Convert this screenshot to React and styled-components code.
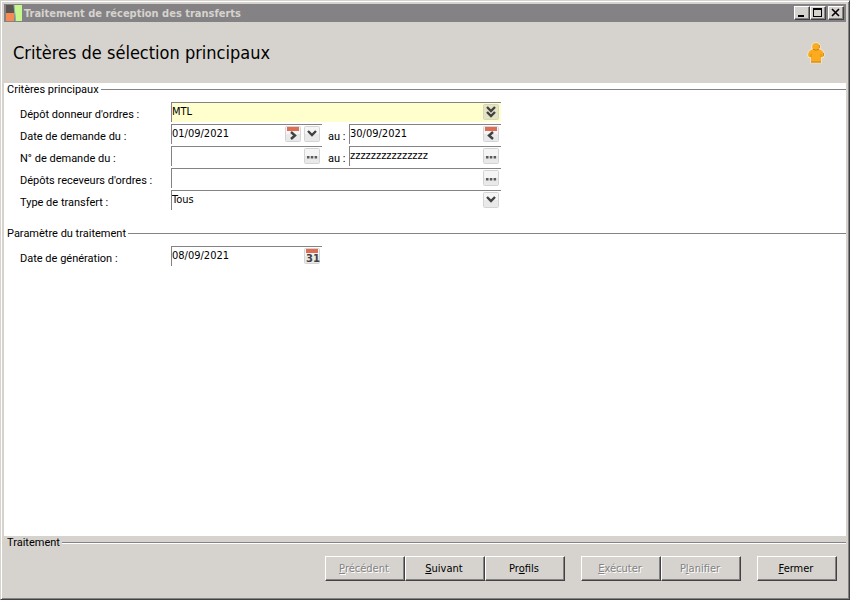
import React from "react";
import styled, { createGlobalStyle } from "styled-components";

const GlobalStyle = createGlobalStyle`
  * {
    box-sizing: border-box;
  }

  body {
    margin: 0;
    background: #d6d3ce;
    color: #000000;
    font-family: Roboto, "Liberation Sans", Arial, sans-serif;
    font-size: 11px;
  }

  button, input, select {
    font-family: "DejaVu Sans Condensed", Tahoma, sans-serif;
    font-size: 11px;
    color: inherit;
  }
`;

const Window = styled.div`
  display: flex;
  flex-direction: column;
  min-height: 100vh;
  padding: 2px;
  background: #d6d3ce;
  border: 1px solid;
  border-color: #d6d3ce #424142 #424142 #d6d3ce;
  box-shadow: inset 1px 1px 0 #ffffff, inset -1px -1px 0 #848284;
`;

const TitleBar = styled.header`
  display: flex;
  align-items: center;
  height: 18px;
  margin: 1px 1px 0;
  padding: 0 2px 0 1px;
  background: #848284;
`;

const Title = styled.h1`
  flex: 1;
  margin: 0 0 0 1px;
  color: #d6d3ce;
  font-family: "DejaVu Sans Condensed", Tahoma, sans-serif;
  font-size: 11px;
  font-weight: bold;
`;

const TitleButton = styled.button`
  display: flex;
  align-items: center;
  justify-content: center;
  width: 16px;
  height: 14px;
  margin-left: ${(props) => (props.$spaced ? "2px" : "0")};
  padding: 0;
  background: #d6d3ce;
  border: 1px solid;
  border-color: #ffffff #424142 #424142 #ffffff;
  box-shadow: inset -1px -1px 0 #848284;
`;

const Banner = styled.div`
  display: flex;
  align-items: center;
  justify-content: space-between;
  height: 61px;
  padding: 0 22px 0 10px;
`;

const Heading = styled.h2`
  margin: 0;
  font-family: "DejaVu Sans Condensed", Tahoma, sans-serif;
  font-size: 18px;
  font-weight: normal;
`;

const Content = styled.main`
  flex: 1;
  margin: 0 1px;
  background: #ffffff;
`;

const Section = styled.section`
  padding-bottom: 17px;
`;

const SectionTitle = styled.h3`
  display: flex;
  align-items: center;
  margin: 0;
  padding-left: 3px;
  font-size: 11px;
  font-weight: normal;
  line-height: 14px;

  &::after {
    content: "";
    flex: 1;
    height: 1px;
    margin: 0 0 1px 2px;
    background: #848284;
    border-bottom: ${(props) => (props.$etched ? "1px solid #ffffff" : "none")};
  }
`;

const Rows = styled.div`
  display: flex;
  flex-direction: column;
  gap: 2px;
  max-width: 497px;
  padding: 5px 0 0 16px;
`;

const Row = styled.div`
  display: flex;
  height: 20px;
`;

const Label = styled.label`
  flex: none;
  width: 151px;
  padding-top: 3px;
  line-height: 20px;
`;

const ToLabel = styled(Label)`
  width: 27px;
  padding-left: 6px;
`;

const Field = styled.div`
  display: flex;
  flex: ${(props) => (props.$half ? "0 0 151px" : "1")};
  gap: 2px;
  min-width: 0;
  padding-right: 1px;
  background: ${(props) => (props.$required ? "#ffffce" : "#ffffff")};
  border-top: 1px solid #848284;
  border-left: 1px solid #848284;
`;

const Input = styled.input`
  flex: 1;
  min-width: 0;
  height: 17px;
  padding: 0;
  background: transparent;
  border: none;
  outline: none;
`;

const SelectBox = styled.div`
  display: grid;
  flex: 1;
`;

const Select = styled.select`
  grid-area: 1 / 1;
  width: 100%;
  height: 17px;
  padding: 0 20px 0 0;
  background: transparent;
  border: none;
  outline: none;
  appearance: none;
`;

const SelectArrow = styled.span`
  grid-area: 1 / 1;
  justify-self: end;
  margin: 1px 1px 0 0;
  height: 16px;
  pointer-events: none;
`;

const IconButton = styled.button`
  flex: none;
  width: 16px;
  height: 16px;
  margin: 1px 1px 0 0;
  padding: 0;
  background: none;
  border: none;
`;

const Footer = styled.footer`
  margin: 0 1px;
  padding-bottom: 16px;
`;

const Actions = styled.div`
  display: flex;
  justify-content: flex-end;
  gap: 16px;
  padding: 6px 9px 0 0;
`;

const ActionGroup = styled.div`
  display: flex;
`;

const ActionButton = styled.button`
  width: 80px;
  height: 25px;
  padding: 0 2px 0 0;
  background: #d6d3ce;
  border: 1px solid;
  border-color: #ffffff #424142 #424142 #ffffff;
  box-shadow: inset -1px -1px 0 #848284;

  &:disabled {
    color: #848284;
    text-shadow: 1px 1px 0 #ffffff;
  }
`;

const Svg = styled.svg`
  display: block;
`;

function AppLogo() {
  return (
    <Svg width="18" height="18" viewBox="0 0 18 18" aria-hidden="true">
      <rect x="1" y="1" width="8" height="8" fill="#5a5552" />
      <rect x="1" y="9" width="8" height="8" fill="#f78a52" />
      <path d="M9 1h8v16h-6z" fill="#c6f78c" />
      <path d="M9 1l1.500 16" stroke="#8cb2a5" fill="none" />
    </Svg>
  );
}

function PersonIcon() {
  return (
    <Svg width="18" height="22" viewBox="0 0 18 22" aria-hidden="true">
      <path
        d="M9 1a3.800 3.800 0 0 0-3 6.300C3 8 1.500 9.500 1 13l1 2h2v5.500h10V15h2l1-2C16.500 9.500 15 8 12 7.300A3.800 3.800 0 0 0 9 1z"
        fill="#fcab1e"
        stroke="#efe3c8"
        strokeWidth="2"
        paintOrder="stroke"
      />
      <path d="M6 7.300q3 1.800 6 0" stroke="#c9821c" fill="none" />
      <path d="M4 15v-3M14 15v-3" stroke="#dd9018" fill="none" />
      <path d="M4 20h10" stroke="#c9821c" />
      <path d="M12.300 3v3M16.500 11v3" stroke="#d18c22" fill="none" />
    </Svg>
  );
}

const glyphs = {
  chevron: <path d="M4 5l4 4 4-4" />,
  double: <path d="M4 3l4 4 4-4M4 8l4 4 4-4" />,
  start: <path d="M6 6l4 3.500L6 13" />,
  end: <path d="M10 6L6 9.500l4 3.500" />,
};

function FieldIcon({ name }) {
  const calendar = name === "start" || name === "end" || name === "day";
  return (
    <Svg width="16" height="16" viewBox="0 0 16 16" aria-hidden="true">
      <rect
        x="0.5"
        y="0.5"
        width="15"
        height="15"
        rx="1"
        fill={name === "double" ? "#e4e3c4" : "#e9e9e9"}
        stroke={name === "double" ? "#d8d6b4" : "#d4d4d4"}
      />
      {name !== "double" && <path d="M1 1h14v7H1z" fill="#f5f5f5" />}
      {calendar && <rect x="2" y="1" width="12" height="4" fill="#de6d52" />}
      {name === "dots" && (
        <path d="M3 8h2.500v2.500H3zM6.800 8h2.500v2.500H6.800zM10.600 8h2.500v2.500h-2.500z" fill="#5a5a5a" />
      )}
      {name === "day" && (
        <text
          x="9"
          y="14"
          textAnchor="middle"
          fontFamily="DejaVu Sans, sans-serif"
          fontSize="10"
          fontWeight="bold"
          fill="#424142"
        >
          31
        </text>
      )}
      <g fill="none" stroke="#424142" strokeWidth="2.400">
        {glyphs[name]}
      </g>
    </Svg>
  );
}

function DropDown({ id, icon, value }) {
  return (
    <SelectBox>
      <Select id={id} defaultValue={value}>
        <option>{value}</option>
      </Select>
      <SelectArrow>
        <FieldIcon name={icon} />
      </SelectArrow>
    </SelectBox>
  );
}

function TextField({ id, value = "", icons, half }) {
  return (
    <Field $half={half}>
      <Input id={id} type="text" defaultValue={value} />
      {icons.map((icon) => (
        <IconButton key={icon} type="button">
          <FieldIcon name={icon} />
        </IconButton>
      ))}
    </Field>
  );
}

function App() {
  return (
    <>
      <GlobalStyle />
      <Window>
        <TitleBar>
          <AppLogo />
          <Title>Traitement de réception des transferts</Title>
          <TitleButton type="button">
            <Svg width="12" height="10" viewBox="0 0 12 10">
              <path d="M2 7h6v2H2z" />
            </Svg>
          </TitleButton>
          <TitleButton type="button">
            <Svg width="12" height="10" viewBox="0 0 12 10">
              <path d="M1 0h9v9H1zM2 2v6h7V2z" fillRule="evenodd" />
            </Svg>
          </TitleButton>
          <TitleButton type="button" $spaced>
            <Svg width="12" height="10" viewBox="0 0 12 10">
              <path d="M2 1l7 7M9 1L2 8" stroke="#000000" strokeWidth="1.600" />
            </Svg>
          </TitleButton>
        </TitleBar>

        <Banner>
          <Heading>Critères de sélection principaux</Heading>
          <PersonIcon />
        </Banner>

        <Content>
          <Section>
            <SectionTitle>Critères principaux</SectionTitle>
            <Rows>
              <Row>
                <Label htmlFor="depot">Dépôt donneur d'ordres :</Label>
                <Field $required>
                  <DropDown id="depot" icon="double" value="MTL" />
                </Field>
              </Row>
              <Row>
                <Label htmlFor="dateFrom">Date de demande du :</Label>
                <TextField id="dateFrom" value="01/09/2021" icons={["start", "chevron"]} half />
                <ToLabel htmlFor="dateTo">au :</ToLabel>
                <TextField id="dateTo" value="30/09/2021" icons={["end"]} />
              </Row>
              <Row>
                <Label htmlFor="numberFrom">N° de demande du :</Label>
                <TextField id="numberFrom" icons={["dots"]} half />
                <ToLabel htmlFor="numberTo">au :</ToLabel>
                <TextField id="numberTo" value="zzzzzzzzzzzzzzz" icons={["dots"]} />
              </Row>
              <Row>
                <Label htmlFor="receivers">Dépôts receveurs d'ordres :</Label>
                <TextField id="receivers" icons={["dots"]} />
              </Row>
              <Row>
                <Label htmlFor="type">Type de transfert :</Label>
                <Field>
                  <DropDown id="type" icon="chevron" value="Tous" />
                </Field>
              </Row>
            </Rows>
          </Section>

          <Section>
            <SectionTitle>Paramètre du traitement</SectionTitle>
            <Rows>
              <Row>
                <Label htmlFor="generation">Date de génération :</Label>
                <TextField id="generation" value="08/09/2021" icons={["day"]} half />
              </Row>
            </Rows>
          </Section>
        </Content>

        <Footer>
          <SectionTitle $etched>Traitement</SectionTitle>
          <Actions>
            <ActionGroup>
              <ActionButton type="button" disabled>
                <u>P</u>récédent
              </ActionButton>
              <ActionButton type="button">
                <u>S</u>uivant
              </ActionButton>
              <ActionButton type="button">
                Pr<u>o</u>fils
              </ActionButton>
            </ActionGroup>
            <ActionGroup>
              <ActionButton type="button" disabled>
                <u>E</u>xécuter
              </ActionButton>
              <ActionButton type="button" disabled>
                P<u>l</u>anifier
              </ActionButton>
            </ActionGroup>
            <ActionButton type="button">
              <u>F</u>ermer
            </ActionButton>
          </Actions>
        </Footer>
      </Window>
    </>
  );
}

export default App;
